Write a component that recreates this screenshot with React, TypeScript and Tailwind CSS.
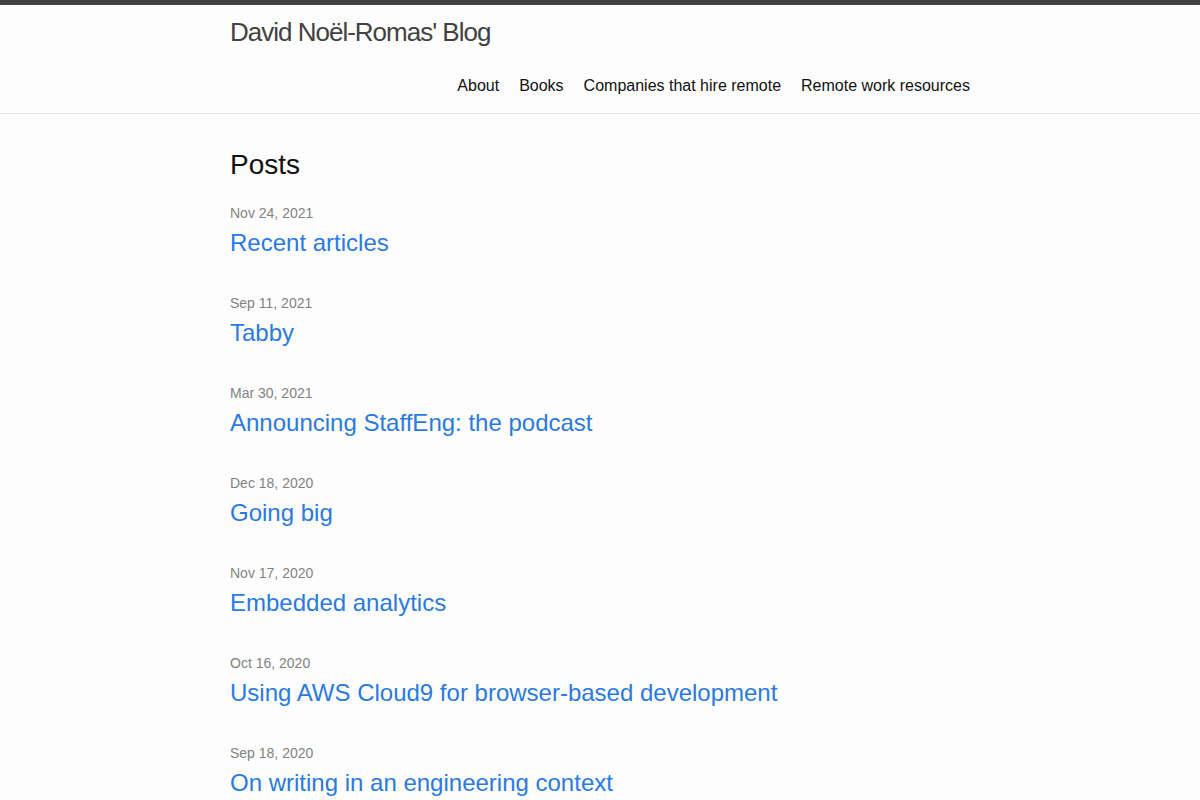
const posts = [
  { date: "Nov 24, 2021", title: "Recent articles" },
  { date: "Sep 11, 2021", title: "Tabby" },
  { date: "Mar 30, 2021", title: "Announcing StaffEng: the podcast" },
  { date: "Dec 18, 2020", title: "Going big" },
  { date: "Nov 17, 2020", title: "Embedded analytics" },
  { date: "Oct 16, 2020", title: "Using AWS Cloud9 for browser-based development" },
  { date: "Sep 18, 2020", title: "On writing in an engineering context" },
];

const nav = ["About", "Books", "Companies that hire remote", "Remote work resources"];

export default function App() {
  return (
    <div
      className="min-h-screen bg-[#fdfdfd] text-[#111111]"
      style={{ fontFamily: '"Liberation Sans", Arial, sans-serif' }}
    >
      <header className="border-t-[5px] border-b border-t-[#424242] border-b-[#e8e8e8]">
        <div className="mx-auto w-[740px]">
          <a className="block text-[26px] leading-[54px] tracking-[-1px] font-light text-[#424242]">
            David Noël-Romas' Blog
          </a>
          <nav className="flex justify-end gap-5 text-base leading-[54px]">
            {nav.map((n) => (
              <a key={n} className="text-[#111111]">
                {n}
              </a>
            ))}
          </nav>
        </div>
      </header>

      <main className="mx-auto w-[740px] py-[30px]">
        <h2 className="text-[28px] leading-[42px] font-normal mb-4">Posts</h2>
        <ul>
          {posts.map((p) => (
            <li key={p.title} className="mb-[31px]">
              <div className="text-sm leading-[22px] text-[#828282]">{p.date}</div>
              <h3 className="mt-[1px] text-2xl leading-[36px]">
                <a className="text-[#2a7ae2]">{p.title}</a>
              </h3>
            </li>
          ))}
        </ul>
      </main>
    </div>
  );
}
